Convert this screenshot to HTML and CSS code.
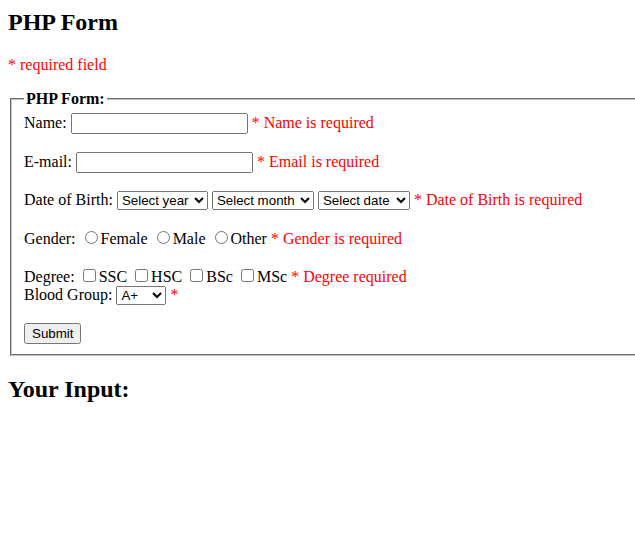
FILE: index.html
```html
<!DOCTYPE html>
<html>
<head>
<meta charset="utf-8">
<title>PHP Form</title>
<link rel="stylesheet" href="styles.css">
</head>
<body>
<h2 class="title">PHP Form</h2>
<p class="error">* required field</p>
<form>
<fieldset class="box">
<legend class="legend">PHP Form:</legend>
Name: <input type="text" class="text"> <span class="error">* Name is required</span>
<br><br>
E-mail: <input type="text" class="text"> <span class="error">* Email is required</span>
<br><br>
Date of Birth: <select class="sel sel-year"><option>Select year</option></select>
<select class="sel sel-month"><option>Select month</option></select>
<select class="sel sel-date"><option>Select date</option></select>
<span class="error">* Date of Birth is required</span>
<br><br>
Gender:
<input type="radio" name="g">Female
<input type="radio" name="g">Male
<input type="radio" name="g">Other
<span class="error">* Gender is required</span>
<br><br>
Degree:
<input type="checkbox">SSC
<input type="checkbox">HSC
<input type="checkbox">BSc
<input type="checkbox">MSc
<span class="error">* Degree required</span>
<br>
Blood Group: <select class="sel sel-blood"><option>A+</option><option>A-</option><option>B+</option><option>B-</option><option>AB+</option><option>AB-</option><option>O+</option><option>O-</option></select>
<span class="error">*</span>
<br><br>
<input type="submit" value="Submit" class="btn">
</fieldset>
</form>
<h2 class="sub">Your Input:</h2>
</body>
</html>
```

FILE: styles.css
```css
html {
  overflow: hidden;
}
body {
  margin: 8px 0 8px 8px;
  font-family: "Liberation Serif", "Times New Roman", serif;
  font-size: 16px;
  color: #000;
  background: #fff;
}
.title {
  margin-top: 0;
  padding-top: 1px;
  font-size: 24px;
}
.sub {
  margin-top: 20px;
  font-size: 24px;
}
.error {
  color: #ff0000;
}
.box {
  margin: 0 -40px 0 2px;
  padding: 4.6px 12px 10px;
  border: 2px groove #c0c0c0;
}
.legend {
  font-weight: bold;
  padding: 0 2px;
}
.text, .sel, .btn {
  font-family: "Liberation Sans", Arial, sans-serif;
  font-size: 13.3333px;
}
.text {
  width: 169px;
}
.sel-year {
  width: 91px;
}
.sel-month {
  width: 102px;
}
.sel-date {
  width: 92px;
}
.sel-blood {
  width: 50px;
}
```
